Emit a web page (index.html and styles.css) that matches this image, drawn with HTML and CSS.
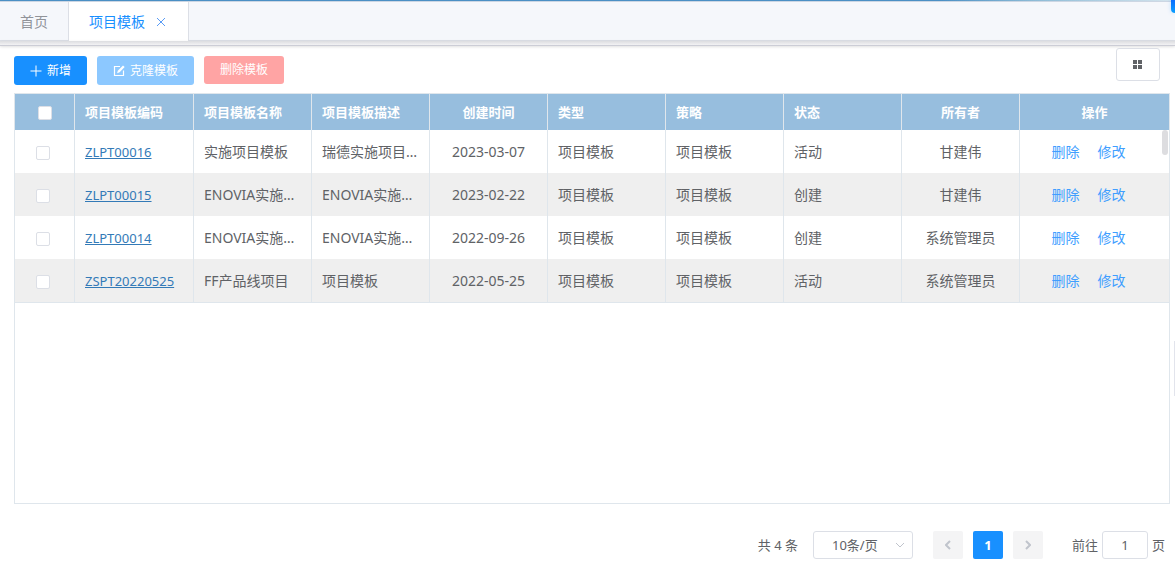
FILE: index.html
```html
<!DOCTYPE html>
<html lang="zh-CN">
<head>
<meta charset="utf-8">
<title>项目模板</title>
<link rel="stylesheet" href="styles.css">
</head>
<body>
<div class="banner"></div>
<nav class="tabs">
  <button class="tab" type="button">首页</button>
  <button class="tab tab-active" type="button">项目模板
    <svg class="tab-close" viewBox="0 0 10 10"><path d="M1 1l8 8M9 1l-8 8"/></svg>
  </button>
</nav>
<div class="tabs-shadow"></div>
<main class="page">
  <div class="toolbar">
    <button class="btn btn-primary" type="button"><svg class="icon-plus" viewBox="0 0 12 12"><path d="M6 0.500v11M0.500 6h11"/></svg>新增</button>
    <button class="btn btn-clone" type="button"><svg class="icon-edit" viewBox="0 0 12 12"><path d="M7 1.500H1.500v9h9V5.500M5 7.200l.3-1.200L10 1.300l.8.8-4.500 4.600z"/></svg>克隆模板</button>
    <button class="btn btn-danger" type="button">删除模板</button>
    <button class="btn-grid" type="button" aria-label="列设置"><svg viewBox="0 0 10 9"><path d="M0 0h4v4H0zM5 0h4v4H5zM0 5h4v4H0zM5 5h4v4H5z"/></svg></button>
  </div>
  <div class="table-box">
    <table class="grid">
      <colgroup><col class="col-check"><col class="col-code"><col><col><col><col><col><col><col><col class="col-ops"></colgroup>
      <thead>
        <tr><th class="center"><input class="check" type="checkbox" aria-label="全选"></th><th>项目模板编码</th><th>项目模板名称</th><th>项目模板描述</th><th class="center">创建时间</th><th>类型</th><th>策略</th><th>状态</th><th class="center">所有者</th><th class="center">操作</th></tr>
      </thead>
      <tbody>
        <tr><td class="pick"><input class="check" type="checkbox" aria-label="ZLPT00016"></td><td><a class="code" href="#">ZLPT00016</a></td><td>实施项目模板</td><td>瑞德实施项目模板</td><td class="center">2023-03-07</td><td>项目模板</td><td>项目模板</td><td>活动</td><td class="center">甘建伟</td><td class="ops"><a class="op" href="#">删除</a><a class="op" href="#">修改</a></td></tr>
        <tr><td class="pick"><input class="check" type="checkbox" aria-label="ZLPT00015"></td><td><a class="code" href="#">ZLPT00015</a></td><td>ENOVIA实施项目</td><td>ENOVIA实施项目</td><td class="center">2023-02-22</td><td>项目模板</td><td>项目模板</td><td>创建</td><td class="center">甘建伟</td><td class="ops"><a class="op" href="#">删除</a><a class="op" href="#">修改</a></td></tr>
        <tr><td class="pick"><input class="check" type="checkbox" aria-label="ZLPT00014"></td><td><a class="code" href="#">ZLPT00014</a></td><td>ENOVIA实施项目</td><td>ENOVIA实施项目</td><td class="center">2022-09-26</td><td>项目模板</td><td>项目模板</td><td>创建</td><td class="center">系统管理员</td><td class="ops"><a class="op" href="#">删除</a><a class="op" href="#">修改</a></td></tr>
        <tr><td class="pick"><input class="check" type="checkbox" aria-label="ZSPT20220525"></td><td><a class="code" href="#">ZSPT20220525</a></td><td>FF产品线项目</td><td>项目模板</td><td class="center">2022-05-25</td><td>项目模板</td><td>项目模板</td><td>活动</td><td class="center">系统管理员</td><td class="ops"><a class="op" href="#">删除</a><a class="op" href="#">修改</a></td></tr>
      </tbody>
    </table>
    <div class="scroll-thumb"></div>
  </div>
  <div class="pagination">
    <span class="total">共 4 条</span>
    <div class="size">
      <select class="size-select" aria-label="每页条数"><option>10条/页</option></select>
      <svg class="size-arrow" viewBox="0 0 10 6"><path d="M1 1l4 4 4-4"/></svg>
    </div>
    <button class="pager" type="button" aria-label="上一页" disabled><svg viewBox="0 0 6 10"><path d="M5 1L1 5l4 4"/></svg></button>
    <button class="pager pager-current" type="button">1</button>
    <button class="pager" type="button" aria-label="下一页" disabled><svg viewBox="0 0 6 10"><path d="M1 1l4 4-4 4"/></svg></button>
    <label class="jump">前往<input class="jump-input" type="text" value="1">页</label>
  </div>
</main>
<div class="corner-badge"></div>
<div class="side-handle"></div>
</body>
</html>
```
FILE: styles.css
```css
* { box-sizing: border-box; }
body {
  margin: 0;
  min-height: 100vh;
  display: flex;
  flex-direction: column;
  overflow: hidden;
  background: #fff;
  color: #606266;
  font: 14px/20px "Noto Sans", "Noto Sans CJK SC", sans-serif;
}
button, input, select { font: inherit; color: inherit; margin: 0; }
svg { fill: none; stroke: currentColor; flex: none; }

.banner {
  height: 2px;
  border-bottom: 1px solid #ccd6e3;
  background: linear-gradient(90deg, #4a8fc4 80%, #8dbbd6 88%, #d5e5ee);
}
.tabs {
  display: flex;
  height: 39px;
  background: #f5f7fb;
  border-bottom: 1px solid #dcdfe6;
}
.tab {
  height: 39px;
  padding: 0 20px;
  border: 0;
  background: none;
  color: #909399;
}
.tab-active {
  display: flex;
  align-items: center;
  gap: 11px;
  background: #fff;
  border: solid #dcdfe6;
  border-width: 0 1px;
  color: #1890ff;
}
.tab-close { width: 10px; height: 10px; margin-right: 2px; stroke: #5a9cf5; }
.tabs-shadow {
  height: 5px;
  background: linear-gradient(#dcdde0, #f2f2f4);
  border-bottom: 1px solid #cccdd6;
  box-shadow: 0 1px 3px #0000001f;
}

.page {
  flex: 1;
  display: flex;
  flex-direction: column;
  padding: 2px 5px 4px 14px;
}
.toolbar {
  display: flex;
  align-items: flex-start;
  gap: 10px;
  padding-right: 10px;
  height: 45px;
}
.btn {
  display: flex;
  align-items: center;
  height: 29px;
  margin-top: 8px;
  padding: 0 16px;
  border: 0;
  border-radius: 3px;
  color: #fff;
  font-size: 12px;
}
.btn-primary { background: #1890ff; gap: 5px; }
.btn-clone { background: #8cc8ff; gap: 5px; }
.btn-danger { background: #ffa4a4; height: 28px; }
.icon-plus { width: 12px; height: 12px; }
.icon-edit { width: 12px; height: 12px; stroke-width: 1.2; }
.btn-grid {
  display: flex;
  align-items: center;
  justify-content: center;
  width: 44px;
  height: 33px;
  margin-left: auto;
  border: 1px solid #dcdfe6;
  border-radius: 3px;
  background: #fff;
}
.btn-grid svg { width: 10px; height: 9px; fill: #606266; stroke: none; }

.table-box {
  position: relative;
  flex: 1;
  border: 1px solid #dfe6ec;
}
.grid {
  width: 100%;
  table-layout: fixed;
  border-collapse: separate;
  border-spacing: 0;
}
.col-check { width: 60px; }
.col-code { width: 119px; }
.col-ops { width: 149px; }
.grid th, .grid td {
  padding: 0 10px;
  border-right: 1px solid #dfe6ec;
  text-align: left;
  white-space: nowrap;
  overflow: hidden;
  text-overflow: ellipsis;
}
.grid th:last-child, .grid td:last-child { border-right: 0; }
.grid th {
  height: 36px;
  background: #97bede;
  color: #fff;
  font-size: 13px;
  font-weight: 700;
}
.grid td { height: 43px; }
.grid tr:nth-child(even) td { background: #efefef; }
.grid tr:last-child td { height: 44px; border-bottom: 1px solid #dfe6ec; }
.grid .center, .grid .ops { text-align: center; }
.grid .pick { padding: 0 14px 0 10px; text-align: center; }
.check {
  appearance: none;
  display: inline-block;
  width: 14px;
  height: 14px;
  border: 1px solid #dcdfe6;
  border-radius: 2px;
  background: #fff;
  vertical-align: middle;
}
.code { color: #337ab7; font-size: 13px; text-decoration: underline; }
.op { color: #409eff; text-decoration: none; }
.op + .op { margin-left: 18px; }
.grid .ops { padding: 0 22px 0 10px; }
.scroll-thumb {
  position: absolute;
  top: 36px;
  right: 1px;
  width: 6px;
  height: 25px;
  border-radius: 3px;
  background: #dddde0;
}

.pagination {
  display: flex;
  align-items: center;
  justify-content: flex-end;
  gap: 10px;
  height: 28px;
  margin-top: 27px;
  padding-right: 5px;
  font-size: 13px;
}
.total { margin-right: 5px; }
.size { position: relative; margin-right: 10px; }
.size-select {
  appearance: none;
  display: block;
  width: 100px;
  height: 28px;
  padding: 0 25px 0 18px;
  border: 1px solid #dcdfe6;
  border-radius: 3px;
  background: #fff;
}
.size-arrow {
  position: absolute;
  top: 11px;
  right: 8px;
  width: 10px;
  height: 6px;
  color: #c0c4cc;
}
.pager {
  display: flex;
  align-items: center;
  justify-content: center;
  width: 30px;
  height: 28px;
  padding: 0;
  border: 0;
  border-radius: 2px;
  background: #f4f4f5;
  color: #c0c4cc;
}
.pager svg { width: 6px; height: 10px; stroke-width: 2; }
.pager-current { background: #1890ff; color: #fff; font-weight: 700; }
.jump { display: flex; align-items: center; gap: 4px; margin-left: 19px; }
.jump-input {
  width: 46px;
  height: 28px;
  padding: 0 3px;
  border: 1px solid #dcdfe6;
  border-radius: 3px;
  text-align: center;
}

.corner-badge {
  position: absolute;
  top: 0;
  right: 0;
  width: 4px;
  height: 13px;
  border-bottom-left-radius: 4px;
  background: linear-gradient(#0a6cff, #0aa0ff);
  box-shadow: 0 0 4px #1890ff40;
}
.side-handle {
  position: absolute;
  top: 341px;
  right: 0;
  width: 1px;
  height: 55px;
  background: #e2e4ec;
}
```
